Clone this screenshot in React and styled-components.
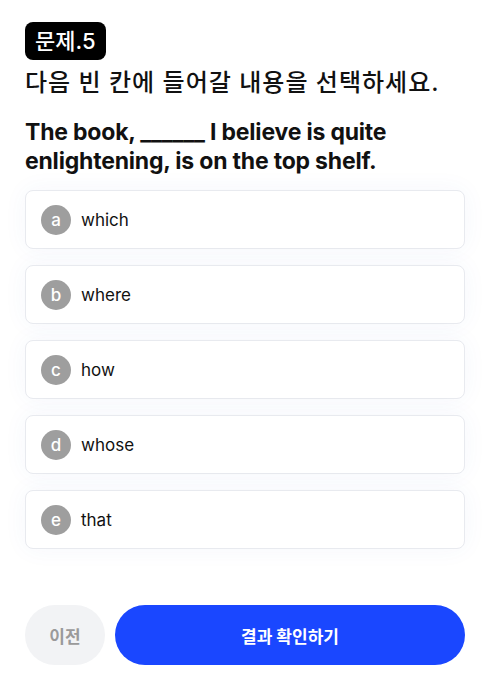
import React from 'react';
import styled, { createGlobalStyle } from 'styled-components';

const GlobalStyle = createGlobalStyle`
  html, body {
    margin: 0;
    padding: 0;
    background: #ffffff;
  }
  body {
    font-family: Inter, "Noto Sans CJK KR", sans-serif;
    color: #111;
  }
`;

const Page = styled.div`
  display: flex;
  flex-direction: column;
  height: 686px;
  padding: 22px 22px 0 25px;
  box-sizing: border-box;
`;

const Badge = styled.div`
  align-self: flex-start;
  background: #000;
  color: #fff;
  font-size: 22px;
  font-weight: 500;
  height: 38px;
  line-height: 38px;
  padding: 0 10px;
  border-radius: 8px;
`;

const Title = styled.h1`
  margin: 7px 0 0;
  font-size: 24px;
  font-weight: 500;
  line-height: 32px;
  letter-spacing: 1px;
`;

const Question = styled.p`
  margin: 19px 0 0;
  font-size: 23px;
  font-weight: 700;
  line-height: 29px;
  letter-spacing: -0.2px;
`;

const Options = styled.div`
  display: flex;
  flex-direction: column;
  gap: 16px;
  margin-top: 14px;
`;

const Option = styled.div`
  display: flex;
  align-items: center;
  gap: 10px;
  height: 59px;
  padding: 0 15px;
  box-sizing: border-box;
  background: #fff;
  border: 1px solid #e8eaef;
  border-radius: 8px;
  box-shadow: 0 0 24px rgba(60, 90, 200, 0.05);
`;

const Letter = styled.span`
  width: 30px;
  height: 30px;
  border-radius: 50%;
  background: #9e9e9e;
  color: #fff;
  font-size: 17px;
  font-weight: 500;
  display: flex;
  align-items: center;
  justify-content: center;
  flex-shrink: 0;
`;

const OptionText = styled.span`
  font-size: 17px;
  color: #111;
`;

const Footer = styled.div`
  display: flex;
  gap: 10px;
  margin-top: 56px;
`;

const Button = styled.button`
  height: 60px;
  border: none;
  border-radius: 30px;
  font-family: inherit;
  font-size: 17px;
  font-weight: 700;
  background: ${p => (p.$primary ? '#1a47ff' : '#f2f3f5')};
  color: ${p => (p.$primary ? '#fff' : '#9a9a9a')};
  width: ${p => (p.$primary ? 'auto' : '80px')};
  flex: ${p => (p.$primary ? '1' : 'none')};
`;

const options = ['which', 'where', 'how', 'whose', 'that'];
const letters = ['a', 'b', 'c', 'd', 'e'];

export default function App() {
  return (
    <>
      <GlobalStyle />
      <Page>
        <Badge>문제.5</Badge>
        <Title>다음 빈 칸에 들어갈 내용을 선택하세요.</Title>
        <Question>The book, ______ I believe is quite enlightening, is on the top shelf.</Question>
        <Options>
          {options.map((opt, i) => (
            <Option key={i}>
              <Letter>{letters[i]}</Letter>
              <OptionText>{opt}</OptionText>
            </Option>
          ))}
        </Options>
        <Footer>
          <Button>이전</Button>
          <Button $primary>결과 확인하기</Button>
        </Footer>
      </Page>
    </>
  );
}
